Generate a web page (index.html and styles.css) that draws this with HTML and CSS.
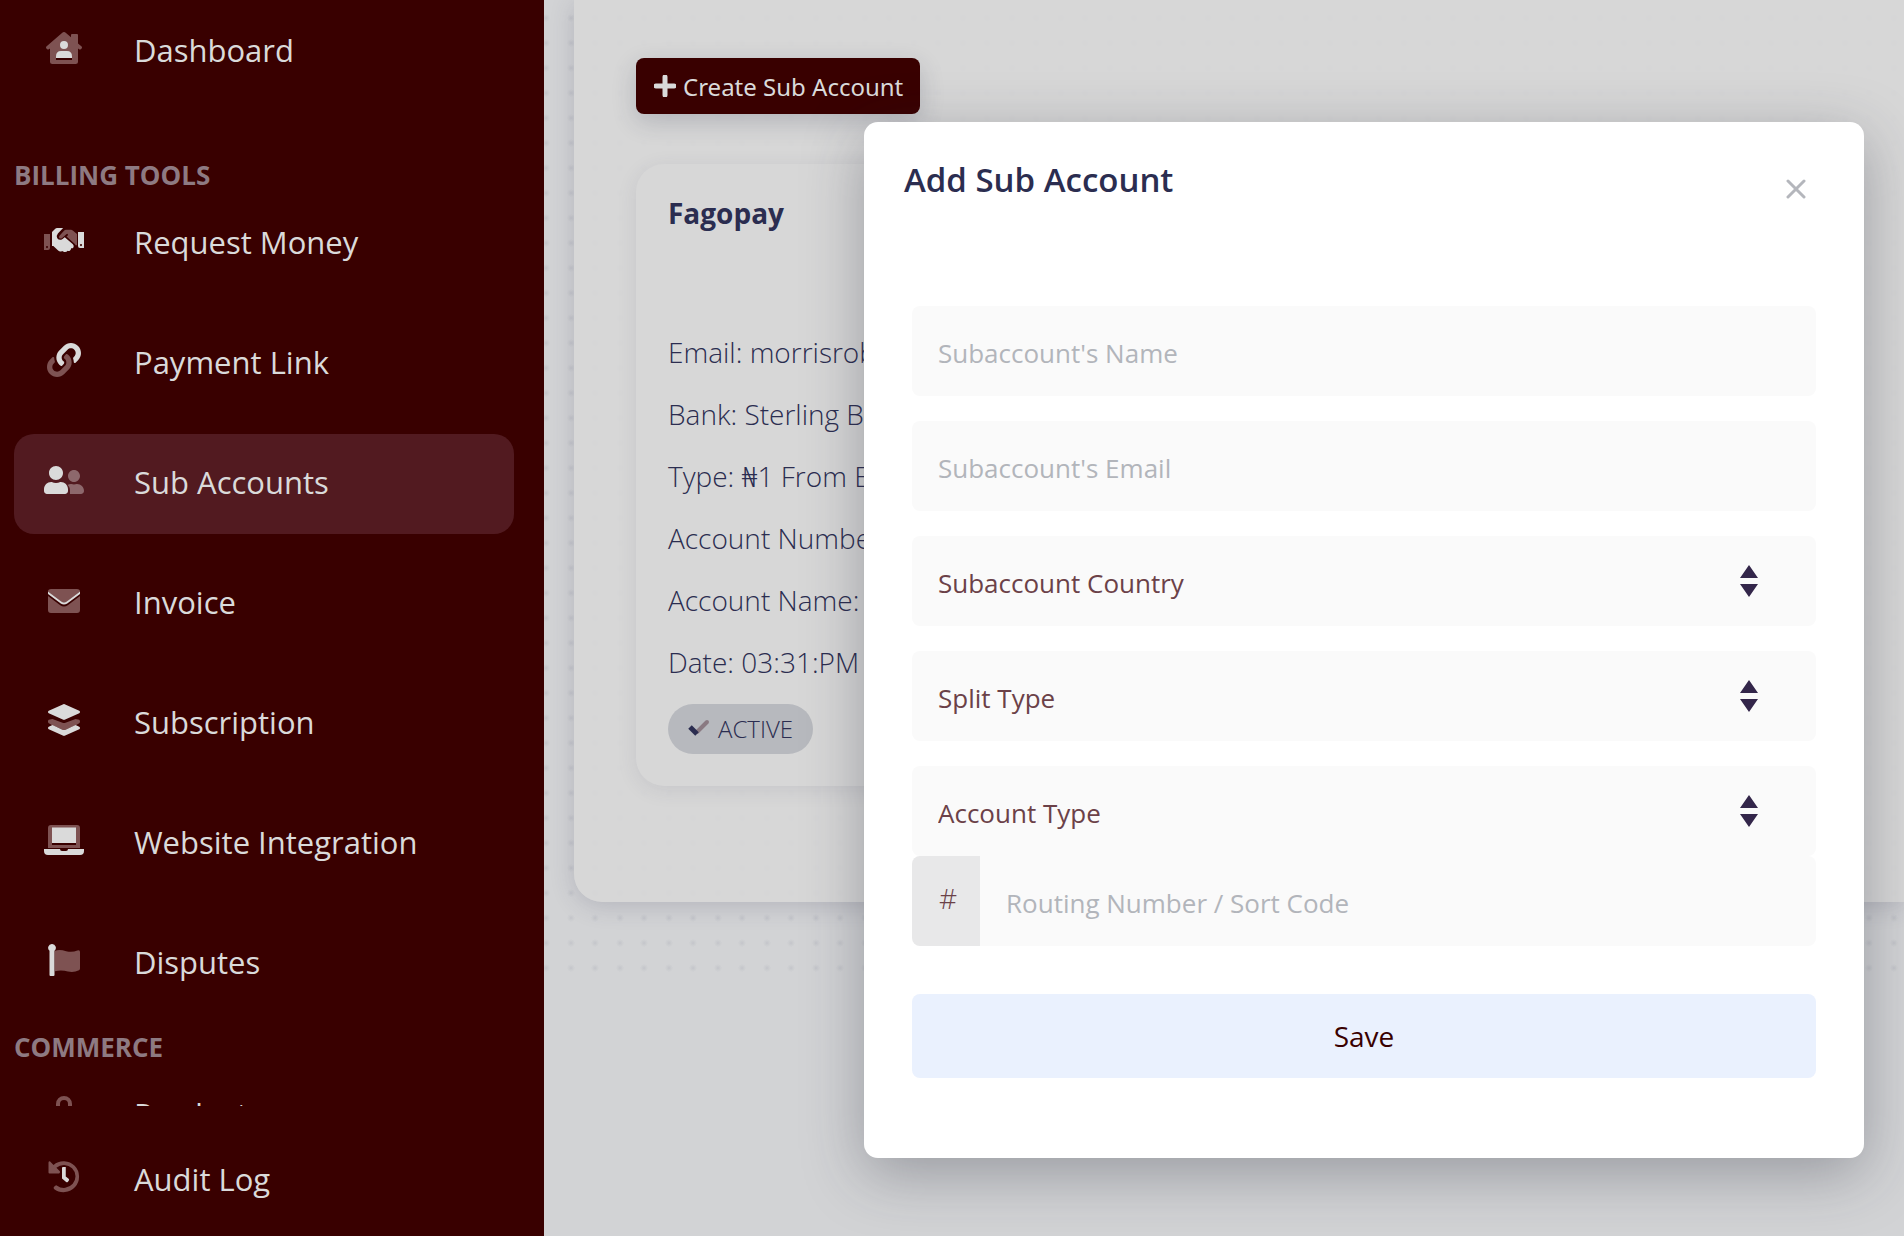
FILE: index.html
```html
<!DOCTYPE html>
<html lang="en">
<head>
<meta charset="utf-8">
<meta name="viewport" content="width=device-width, initial-scale=1">
<title>Sub Accounts</title>
<link rel="stylesheet" href="styles.css">
</head>
<body>
<div class="layout">
  <aside class="sidebar">
    <nav class="nav" aria-label="Main">
      <a class="nav-link" href="#dashboard">
        <span class="nav-icon"><svg viewBox="0 0 576 512" width="36" height="32"><path class="dim" fill-rule="evenodd" d="M256 14Q288-12 320 14L400 84V48Q400 32 416 32H496Q512 32 512 48V182L570 232Q582 246 570 262L556 276Q544 284 530 276L512 262V472Q512 512 472 512H104Q64 512 64 472V262L46 276Q32 284 20 276L6 262Q-6 246 6 232ZM160 416V448H416V416Z"/><path d="M288 144a64 64 0 1 1 0 128 64 64 0 1 1 0-128zM240 304H336Q416 304 416 392V416H160V392Q160 304 240 304Z"/></svg></span>
        <span>Dashboard</span>
      </a>
      <h2 class="nav-heading nav-heading-first">BILLING TOOLS</h2>
      <a class="nav-link" href="#request-money">
        <span class="nav-icon"><svg viewBox="0 0 640 512" width="40" height="32"><path class="dim" fill-rule="evenodd" d="M0 160H96V384Q96 416 64 416H0ZM48 352a16 16 0 1 0 .1 0ZM350 90H432Q448 90 460 102L528 158V340H506Q500 322 480 306L360 200 380 182Q388 172 378 160 368 154 358 162L286 226Q262 240 246 224 232 206 248 188L324 102Q336 90 350 90Z"/><path fill-rule="evenodd" d="M128 128L172 82Q190 64 212 64H306L222 152Q192 188 212 226 240 266 286 246L332 210 462 322Q488 350 468 378 454 392 434 388 434 418 408 430 390 434 378 426 360 452 322 446L290 430Q260 452 226 424L150 352H128ZM544 128H640V384H576Q544 384 544 352ZM592 320a16 16 0 1 0 .1 0Z"/></svg></span>
        <span>Request Money</span>
      </a>
      <a class="nav-link" href="#payment-link">
        <span class="nav-icon"><svg viewBox="0 0 512 512" width="34" height="34"><path class="dim" d="M326.612 185.391c59.747 59.809 58.927 155.698.36 214.59-.11.12-.24.25-.36.37l-67.2 67.2c-59.27 59.27-155.699 59.262-214.96 0-59.27-59.26-59.27-155.7 0-214.96l37.106-37.106c9.84-9.84 26.786-3.3 27.294 10.606.648 17.722 3.826 35.527 9.69 52.721 1.986 5.822.567 12.262-3.783 16.612l-13.087 13.087c-28.026 28.026-28.905 73.66-1.155 101.96 28.024 28.579 74.086 28.749 102.325.51l67.2-67.19c28.191-28.191 28.073-73.757 0-101.83-3.701-3.694-7.429-6.564-10.341-8.569a16.037 16.037 0 0 1-6.947-12.606c-.396-10.567 3.348-21.456 11.698-29.806l21.054-21.055c5.521-5.521 14.182-6.199 20.584-1.731a152.482 152.482 0 0 1 20.522 17.197z"/><path d="M467.547 44.449c-59.261-59.262-155.69-59.27-214.96 0l-67.2 67.2c-.12.12-.25.25-.36.37-58.566 58.892-59.387 154.781.36 214.59a152.454 152.454 0 0 0 20.521 17.196c6.402 4.468 15.064 3.789 20.584-1.731l21.054-21.055c8.35-8.35 12.094-19.239 11.698-29.806a16.037 16.037 0 0 0-6.947-12.606c-2.912-2.005-6.64-4.875-10.341-8.569-28.073-28.073-28.191-73.639 0-101.83l67.2-67.19c28.239-28.239 74.3-28.069 102.325.51 27.75 28.3 26.872 73.934-1.155 101.96l-13.087 13.087c-4.35 4.35-5.769 10.79-3.783 16.612 5.864 17.194 9.042 34.999 9.69 52.721.509 13.906 17.454 20.446 27.294 10.606l37.106-37.106c59.271-59.259 59.271-155.699.001-214.959z"/></svg></span>
        <span>Payment Link</span>
      </a>
      <a class="nav-link nav-link-active" href="#sub-accounts" aria-current="page">
        <span class="nav-icon"><svg viewBox="0 0 640 512" width="40" height="32"><path d="M192 256c61.900 0 112-50.100 112-112S253.900 32 192 32 80 82.100 80 144s50.100 112 112 112zm76.800 32h-8.300c-20.800 10-43.900 16-68.500 16s-47.600-6-68.500-16h-8.300C51.600 288 0 339.600 0 403.200V432c0 26.500 21.500 48 48 48h288c26.500 0 48-21.500 48-48v-28.800c0-63.600-51.600-115.200-115.200-115.200z"/><path class="dim" d="M480 288c53 0 96-43 96-96s-43-96-96-96-96 43-96 96 43 96 96 96zm48 32h-3.800c-13.900 4.800-28.600 8-44.200 8s-30.300-3.200-44.200-8H432c-20.400 0-39.200 5.900-55.700 15.400 24.400 20 39.700 45 39.700 83.600v54.600c0 2.200-.5 4.300-.6 6.400H592c26.500 0 48-21.500 48-48 0-61.900-50.100-112-112-112z"/></svg></span>
        <span>Sub Accounts</span>
      </a>
      <a class="nav-link" href="#invoice">
        <span class="nav-icon"><svg viewBox="0 0 512 512" width="32" height="32"><path class="dim" d="M48 80H464Q512 80 512 120L300 284Q256 316 212 284L0 120Q0 80 48 80ZM0 192L196 338Q256 380 316 338L512 192V416Q512 464 464 464H48Q0 464 0 416Z"/><path d="M0 118L212 278Q256 312 300 278L512 118V158L308 310Q256 346 204 310L0 158Z"/></svg></span>
        <span>Invoice</span>
      </a>
      <a class="nav-link" href="#subscription">
        <span class="nav-icon"><svg viewBox="0 0 512 512" width="32" height="32"><path d="M12.410 148.020l232.940 105.670c6.800 3.090 14.490 3.090 21.290 0l232.940-105.670c16.550-7.510 16.550-32.520 0-40.030L266.650 2.310a25.607 25.607 0 0 0-21.290 0L12.410 107.980c-16.550 7.510-16.550 32.530 0 40.040z"/><path class="dim" d="M499.590 252l-58.090-14-161.640 61c-7.560 3.430-15.590 5.170-23.860 5.170s-16.290-1.740-23.860-5.170L70.510 238l-58.100 14c-16.550 7.500-16.550 48 0 56L60 334l185 82c6.800 3.080 14.490 3.080 21.290 0L452 334l47.590-26c16.550-8 16.550-48 0-56z"/><path d="M499.590 364.100l-57.870-26.230-161.860 73.370c-7.560 3.430-15.590 5.170-23.860 5.170s-16.290-1.740-23.860-5.170L70.290 337.870 12.410 364.100c-16.550 7.500-16.550 32.500 0 40l232.940 105.590c6.800 3.080 14.490 3.080 21.290 0L499.590 404.100c16.550-7.500 16.550-32.500 0-40z"/></svg></span>
        <span>Subscription</span>
      </a>
      <a class="nav-link" href="#website-integration">
        <span class="nav-icon"><svg viewBox="0 0 640 512" width="40" height="32"><path class="dim" fill-rule="evenodd" d="M112 16H528Q576 16 576 64V384H64V64Q64 16 112 16ZM128 304V336H512V304Z"/><path d="M128 56H512V304H128ZM0 400H256Q256 432 288 432H352Q384 432 384 400H640V432Q640 496 576 496H64Q0 496 0 432Z"/></svg></span>
        <span>Website Integration</span>
      </a>
      <a class="nav-link" href="#disputes">
        <span class="nav-icon"><svg viewBox="0 0 512 512" width="32" height="32"><path class="dim" d="M112 108Q190 84 290 116 390 140 470 104 512 88 512 128V392Q512 410 496 420 410 462 320 440 220 408 112 434Z"/><path d="M64 0a60 60 0 0 1 40 106V496Q104 512 88 512H40Q24 512 24 496V106A60 60 0 0 1 64 0Z"/></svg></span>
        <span>Disputes</span>
      </a>
      <h2 class="nav-heading">COMMERCE</h2>
      <a class="nav-link" href="#products">
        <span class="nav-icon"><svg viewBox="0 0 448 512" width="28" height="32"><path class="dim" d="M96 160V128a128 128 0 0 1 256 0V160H288V128a64 64 0 0 0-128 0V160Z"/><path d="M0 160H448V432Q448 512 368 512H80Q0 512 0 432Z"/></svg></span>
        <span>Products</span>
      </a>
    </nav>
    <div class="sidebar-footer">
      <a class="nav-link" href="#audit-log">
        <span class="nav-icon"><svg viewBox="0 0 512 512" width="32" height="32"><path class="dim" d="M34 8L88 62A248 248 0 1 1 96 446Q84 428 98 412L116 394Q130 384 146 394A184 184 0 1 0 134 108L186 160Q202 184 178 200H24Q8 200 8 184V22Q12 0 34 8Z"/><path d="M228 96H284V248L330 284Q344 296 334 312L316 334Q304 344 290 334L224 280V112Q224 96 240 96Z"/></svg></span>
        <span>Audit Log</span>
      </a>
    </div>
  </aside>

  <main class="main">
    <div class="dots">
      <section class="panel">
        <button class="create-button" type="button">
          <svg viewBox="0 0 22 22" width="22" height="22" aria-hidden="true"><path d="M11 2V20M2 11H20" fill="none" stroke="currentColor" stroke-width="5" stroke-linecap="round"/></svg>
          Create Sub Account
        </button>
        <article class="account">
          <h3 class="account-name">Fagopay</h3>
          <p class="account-row">Email: morrisrob</p>
          <p class="account-row">Bank: Sterling B</p>
          <p class="account-row">Type: ₦1 From E</p>
          <p class="account-row">Account Number</p>
          <p class="account-row">Account Name:</p>
          <p class="account-row">Date: 03:31:PM</p>
          <span class="badge"><svg viewBox="0 0 22 18" width="22" height="18" aria-hidden="true"><path d="M9 13L19 3" stroke="#8a7a82" stroke-width="4" stroke-linecap="round"/><path d="M2 8L9 15" stroke="#2b2d50" stroke-width="5"/></svg>ACTIVE</span>
        </article>
      </section>
    </div>
  </main>
</div>

<div class="overlay">
  <div class="modal" role="dialog" aria-labelledby="modal-title">
    <header class="modal-header">
      <h1 class="modal-title" id="modal-title">Add Sub Account</h1>
      <button class="close" type="button" aria-label="Close"><svg viewBox="0 0 20 20" width="20" height="20"><path d="M2 2L18 18M18 2L2 18" fill="none" stroke="currentColor" stroke-width="3" stroke-linecap="round"/></svg></button>
    </header>
    <form class="form">
      <input class="field" type="text" aria-label="Subaccount's Name" placeholder="Subaccount's Name">
      <input class="field" type="email" aria-label="Subaccount's Email" placeholder="Subaccount's Email">
      <div class="select">
        <select class="field" aria-label="Subaccount Country"><option>Subaccount Country</option></select>
        <svg class="arrows" viewBox="0 0 18 32" width="18" height="32"><path d="M9 0L18 13H0ZM9 32L0 19H18Z"/></svg>
      </div>
      <div class="select">
        <select class="field" aria-label="Split Type"><option>Split Type</option></select>
        <svg class="arrows" viewBox="0 0 18 32" width="18" height="32"><path d="M9 0L18 13H0ZM9 32L0 19H18Z"/></svg>
      </div>
      <div>
        <div class="select">
          <select class="field" aria-label="Account Type"><option>Account Type</option></select>
          <svg class="arrows" viewBox="0 0 18 32" width="18" height="32"><path d="M9 0L18 13H0ZM9 32L0 19H18Z"/></svg>
        </div>
        <div class="group">
          <label class="prefix" for="routing">#</label>
          <input class="field group-field" id="routing" type="text" placeholder="Routing Number / Sort Code">
        </div>
      </div>
      <button class="save" type="submit">Save</button>
    </form>
  </div>
</div>
</body>
</html>
```
FILE: styles.css
```css
* {
  box-sizing: border-box;
}

body {
  margin: 0;
  background: #d2d3d5;
  color: #2b2d50;
  font-family: "Open Sans", "Noto Sans", sans-serif;
  font-size: 28px;
}

h1, h2, h3, p {
  margin: 0;
}

button {
  border: 0;
  cursor: pointer;
}

.layout {
  display: flex;
  height: 100vh;
  overflow: hidden;
}

/* Sidebar */

.sidebar {
  display: flex;
  flex-direction: column;
  flex: 0 0 544px;
  padding: 0 30px 0 14px;
  background: #390000;
  color: #dadada;
}

.nav {
  flex: 1;
  min-height: 0;
  overflow: hidden;
  padding-top: 2px;
}

.nav-link {
  display: flex;
  align-items: center;
  gap: 49px;
  height: 100px;
  padding: 0 0 4px 29px;
  border-radius: 20px;
  color: inherit;
  font-size: 31px;
  text-decoration: none;
}

.nav-link + .nav-link {
  margin-top: 20px;
}

.nav-link-active {
  background: #521a20;
}

.nav-icon {
  display: flex;
  justify-content: center;
  width: 42px;
  padding-bottom: 4px;
}

.nav-icon svg {
  fill: #dadada;
}

.nav-icon .dim {
  fill: #7e5252;
}

.nav-link-active .dim {
  fill: #8d686c;
}

.nav-heading {
  height: 52px;
  color: #8e7a82;
  font-size: 26px;
  font-weight: 700;
  line-height: 66px;
}

.nav-heading-first {
  margin-top: 40px;
}

.sidebar-footer {
  padding: 25px 0 5px;
}

/* Page content */

.main {
  flex: 1;
  min-width: 0;
}

.dots {
  padding: 0 0 70px 30px;
  background-image:
    radial-gradient(circle 4px at 12px 21px, #c4c5ca, transparent),
    radial-gradient(circle 4px at 37px 21px, #c4c5ca, transparent);
  background-size: 49px 25px;
  background-position: left -10px bottom;
}

.panel {
  padding: 58px 62px 116px;
  border-bottom-left-radius: 28px;
  background: rgba(215, 215, 215, 0.92);
  box-shadow: 0 4px 24px rgba(60, 60, 90, 0.2);
}

.create-button {
  display: flex;
  align-items: center;
  gap: 7px;
  height: 56px;
  padding: 0 17px 0 18px;
  border-radius: 8px;
  background: #390000;
  box-shadow: 0 8px 24px rgba(40, 45, 70, 0.2);
  color: #dadada;
  font: 24px "Noto Sans", sans-serif;
}

.account {
  max-width: 800px;
  margin-top: 50px;
  padding: 27px 32px 32px;
  border-radius: 28px;
  background: #d7d7d7;
  box-shadow: 0 4px 20px rgba(60, 60, 90, 0.1);
}

.account-name {
  margin-bottom: 86px;
  font-size: 28px;
  font-weight: 700;
  line-height: 44px;
}

.account-row {
  font-weight: 300;
  line-height: 62px;
  white-space: nowrap;
}

.badge {
  display: inline-flex;
  align-items: center;
  gap: 8px;
  height: 50px;
  margin-top: 11px;
  padding: 0 20px 2px;
  border-radius: 25px;
  background: #b7b9be;
  font-size: 24px;
  font-weight: 300;
}

/* Dialog */

.overlay {
  position: absolute;
  inset: 0;
  display: flex;
  justify-content: flex-end;
  align-items: flex-start;
  padding: 122px 40px 0;
}

.modal {
  width: 1000px;
  max-width: 100%;
  padding: 36px 48px 80px;
  border-radius: 14px;
  background: #fff;
  box-shadow: 0 16px 60px rgba(40, 45, 60, 0.34);
}

.modal-header {
  display: flex;
  justify-content: space-between;
  margin: 0 0 104px -8px;
}

.modal-title {
  font-size: 33px;
  font-weight: 600;
  line-height: 44px;
}

.close {
  display: flex;
  align-items: flex-end;
  padding: 0 10px 0;
  background: none;
  color: #b4b6bc;
  height: 41px;
}

.form {
  display: flex;
  flex-direction: column;
  gap: 25px;
}

.field {
  display: block;
  width: 100%;
  height: 90px;
  padding: 3px 26px 0;
  border: 0;
  border-radius: 8px;
  appearance: none;
  background: #fafafa;
  color: #6b4148;
  font: 26px "Open Sans", sans-serif;
}

.field::placeholder {
  color: #b2b5bb;
  opacity: 1;
}

.select {
  display: grid;
  align-items: center;
}

.select > * {
  grid-area: 1 / 1;
}

.arrows {
  justify-self: end;
  margin-right: 58px;
  fill: #33264a;
  pointer-events: none;
}

.group {
  display: flex;
}

.prefix {
  display: flex;
  align-items: center;
  justify-content: center;
  flex: 0 0 68px;
  padding: 0 0 6px 4px;
  border-radius: 8px 0 0 8px;
  background: #e8e8e9;
  color: #6b4148;
  font-weight: 300;
}

.group-field {
  flex: 1;
  min-width: 0;
  border-radius: 0 8px 8px 0;
}

.save {
  height: 84px;
  margin-top: 23px;
  border-radius: 8px;
  background: #eaf1fe;
  color: #390000;
  font: 28px "Open Sans", sans-serif;
}
```
